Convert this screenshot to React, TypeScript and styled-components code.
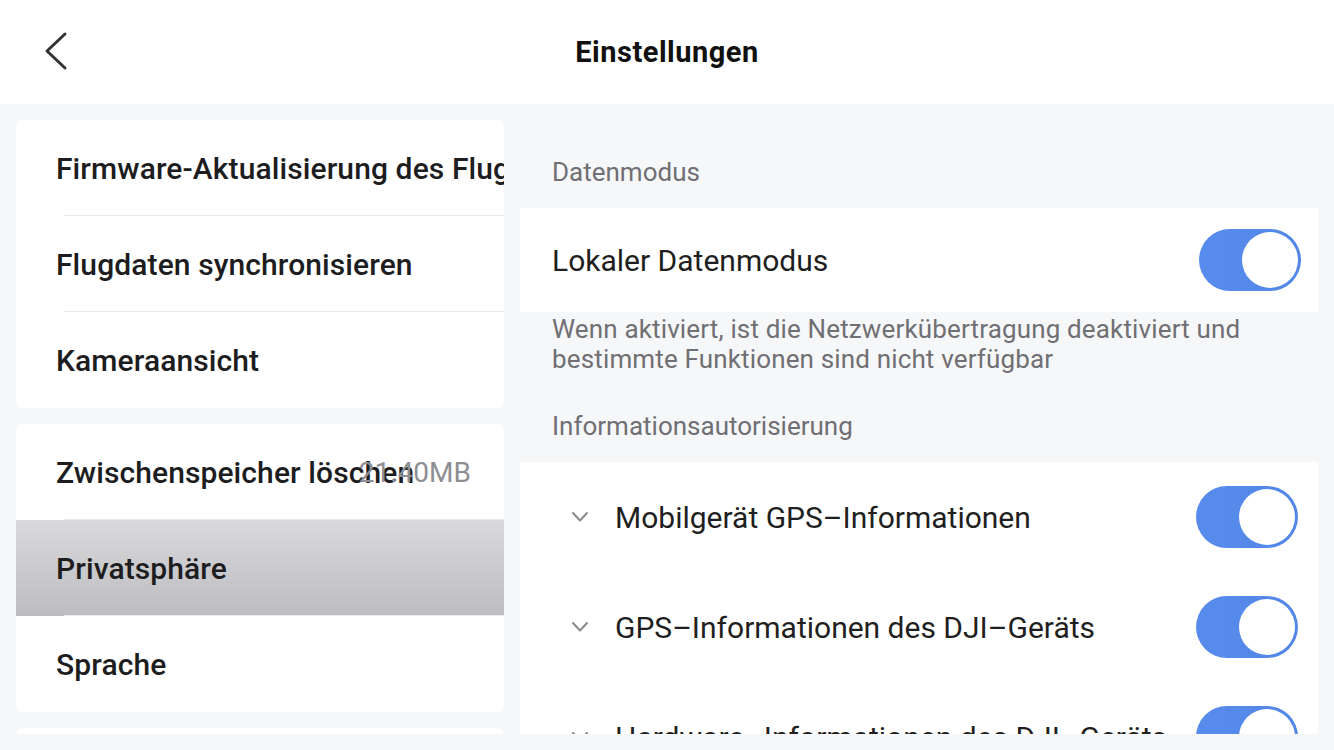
import React from "react";
import styled, { createGlobalStyle } from "styled-components";

const GlobalStyle = createGlobalStyle`
  html, body {
    margin: 0;
    padding: 0;
    background: #f6f7f9;
    font-family: Roboto, "Noto Sans", "Liberation Sans", sans-serif;
  }
  * {
    box-sizing: border-box;
  }
`;

type MenuItem = {
  label: string;
  value?: string;
  selected?: boolean;
};

const menuGroups: MenuItem[][] = [
  [
    { label: "Firmware-Aktualisierung des Fluggeräts" },
    { label: "Flugdaten synchronisieren" },
    { label: "Kameraansicht" },
  ],
  [
    { label: "Zwischenspeicher löschen", value: "21.40MB" },
    { label: "Privatsphäre", selected: true },
    { label: "Sprache" },
  ],
  [{ label: "Über" }],
];

const permissions = [
  "Mobilgerät GPS–Informationen",
  "GPS–Informationen des DJI–Geräts",
  "Hardware–Informationen des DJI–Geräts",
];

function BackIcon() {
  return (
    <svg width="24" height="40" viewBox="0 0 24 40" fill="none">
      <path
        d="M21 3 L3 20 L21 37"
        stroke="#333"
        strokeWidth="3"
        strokeLinecap="round"
        strokeLinejoin="round"
      />
    </svg>
  );
}

function ChevronDown() {
  return (
    <svg width="18" height="12" viewBox="0 0 18 12" fill="none">
      <path
        d="M2 2 L9 9.5 L16 2"
        stroke="#8a8a8e"
        strokeWidth="2"
        strokeLinecap="round"
        strokeLinejoin="round"
      />
    </svg>
  );
}

function Switch({ on = true }: { on?: boolean }) {
  return (
    <Track $on={on}>
      <Knob />
    </Track>
  );
}

export default function App() {
  return (
    <Page>
      <GlobalStyle />
      <Header>
        <BackButton>
          <BackIcon />
        </BackButton>
        <Title>Einstellungen</Title>
        <span />
      </Header>

      <Body>
        <Sidebar>
          {menuGroups.map((group, gi) => (
            <MenuCard key={gi}>
              {group.map((item, i) => (
                <MenuRow
                  key={item.label}
                  $selected={item.selected}
                  $last={i === group.length - 1}
                >
                  <MenuLabel>{item.label}</MenuLabel>
                  {item.value && <MenuValue>{item.value}</MenuValue>}
                </MenuRow>
              ))}
            </MenuCard>
          ))}
        </Sidebar>

        <Content>
          <SectionLabel $top={55}>Datenmodus</SectionLabel>
          <Card>
            <ModeRow>
              <RowText>Lokaler Datenmodus</RowText>
              <Switch />
            </ModeRow>
          </Card>
          <Description>
            Wenn aktiviert, ist die Netzwerkübertragung deaktiviert und
            bestimmte Funktionen sind nicht verfügbar
          </Description>
          <SectionLabel $top={39}>Informationsautorisierung</SectionLabel>
          <Card>
            {permissions.map((p) => (
              <PermissionRow key={p}>
                <ChevronDown />
                <RowText>{p}</RowText>
                <Switch />
              </PermissionRow>
            ))}
          </Card>
        </Content>
      </Body>
    </Page>
  );
}

const Page = styled.div`
  width: 1334px;
  height: 750px;
  display: flex;
  flex-direction: column;
  background: #f6f7f9;
  overflow: hidden;
`;

const Header = styled.header`
  height: 104px;
  flex-shrink: 0;
  background: #ffffff;
  display: grid;
  grid-template-columns: 1fr auto 1fr;
  align-items: center;
`;

const BackButton = styled.div`
  display: flex;
  align-items: center;
  padding-left: 44px;
  padding-bottom: 2px;
`;

const Title = styled.h1`
  margin: 0;
  font-size: 29px;
  font-weight: 700;
  color: #111;
  letter-spacing: 0.5px;
`;

const Body = styled.div`
  flex: 1;
  display: flex;
  gap: 16px;
  padding: 0 16px 16px;
  min-height: 0;
`;

const Sidebar = styled.nav`
  width: 488px;
  flex-shrink: 0;
  padding-top: 16px;
  display: flex;
  flex-direction: column;
  gap: 16px;
  overflow: hidden;
`;

const MenuCard = styled.div`
  background: #ffffff;
  border-radius: 8px;
  overflow: hidden;
  flex-shrink: 0;
`;

const MenuRow = styled.div<{ $selected?: boolean; $last?: boolean }>`
  height: 96px;
  display: grid;
  align-items: center;
  padding: 0 33px 0 40px;
  position: relative;
  background: ${({ $selected }) =>
    $selected ? "linear-gradient(#d9d9dc, #bdbdc1)" : "transparent"};

  &:after {
    content: "";
    display: ${({ $last }) => ($last ? "none" : "block")};
    position: absolute;
    left: 48px;
    right: 0;
    bottom: 0;
    height: 1px;
    background: #e9e9eb;
  }

  & > * {
    grid-area: 1 / 1;
  }
`;

const MenuLabel = styled.span`
  font-size: 30px;
  font-weight: 500;
  letter-spacing: 0.1px;
  color: #1d1d1f;
  white-space: nowrap;
  justify-self: start;
`;

const MenuValue = styled.span`
  font-size: 28px;
  color: #8e8e93;
  justify-self: end;
`;

const Content = styled.main`
  flex: 1;
  display: flex;
  flex-direction: column;
  overflow: hidden;
`;

const SectionLabel = styled.div<{ $top: number }>`
  padding: ${({ $top }) => $top}px 32px 23px;
  font-size: 26px;
  line-height: 26px;
  color: #6f6f74;
`;

const Card = styled.div`
  background: #ffffff;
  flex-shrink: 0;
`;

const ModeRow = styled.div`
  height: 104px;
  display: flex;
  align-items: center;
  padding: 0 17px 0 32px;
`;

const PermissionRow = styled.div`
  height: 110px;
  display: flex;
  align-items: center;
  gap: 26px;
  padding: 0 20px 0 51px;
`;

const RowText = styled.span`
  flex: 1;
  font-size: 30px;
  color: #1f1f21;
  white-space: nowrap;
`;

const Description = styled.p`
  margin: 0;
  padding: 2px 40px 0 32px;
  font-size: 26px;
  line-height: 30px;
  letter-spacing: 0.15px;
  color: #6f6f74;
`;

const Track = styled.div<{ $on: boolean }>`
  width: 102px;
  height: 62px;
  border-radius: 31px;
  background: ${({ $on }) =>
    $on ? "linear-gradient(90deg, #578bec, #5287e8)" : "#e3e3e6"};
  display: flex;
  align-items: center;
  justify-content: ${({ $on }) => ($on ? "flex-end" : "flex-start")};
  padding: 0 3px;
  flex-shrink: 0;
`;

const Knob = styled.div`
  width: 56px;
  height: 56px;
  border-radius: 50%;
  background: #ffffff;
`;
